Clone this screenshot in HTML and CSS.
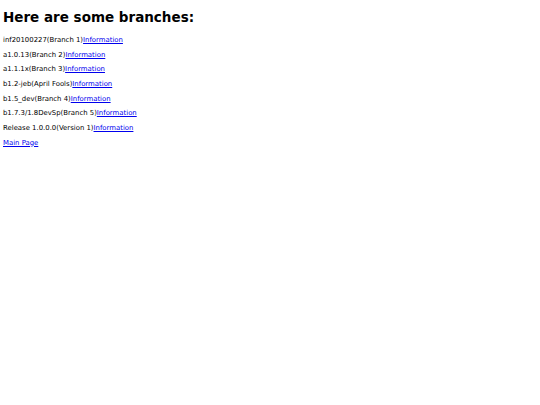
FILE: index.html
```html
<!DOCTYPE html>
<html>
<head>
<meta charset="utf-8">
<link rel="stylesheet" href="styles.css">
</head>
<body>
<h1 class="title">Here are some branches:</h1>
<p class="row">inf20100227(Branch 1)<a href="#">Information</a></p>
<p class="row">a1.0.13(Branch 2)<a href="#">Information</a></p>
<p class="row">a1.1.1x(Branch 3)<a href="#">Information</a></p>
<p class="row">b1.2-jeb(April Fools)<a href="#">Information</a></p>
<p class="row">b1.5_dev(Branch 4)<a href="#">Information</a></p>
<p class="row">b1.7.3/1.8DevSp(Branch 5)<a href="#">Information</a></p>
<p class="row">Release 1.0.0.0(Version 1)<a href="#">Information</a></p>
<p class="row"><a href="#">Main Page</a></p>
</body>
</html>
```
FILE: styles.css
```css
body {
  margin: 0;
  padding: 0 3px;
  font-family: "DejaVu Sans", sans-serif;
  background: #fff;
  color: #000;
}
.title {
  font-size: 13.5px;
  font-weight: bold;
  margin: 8px 0 9px;
  line-height: 18px;
}
.row {
  font-size: 6.9px;
  line-height: 10px;
  margin: 0 0 4.7px;
}
a {
  color: #0000ee;
}
```
